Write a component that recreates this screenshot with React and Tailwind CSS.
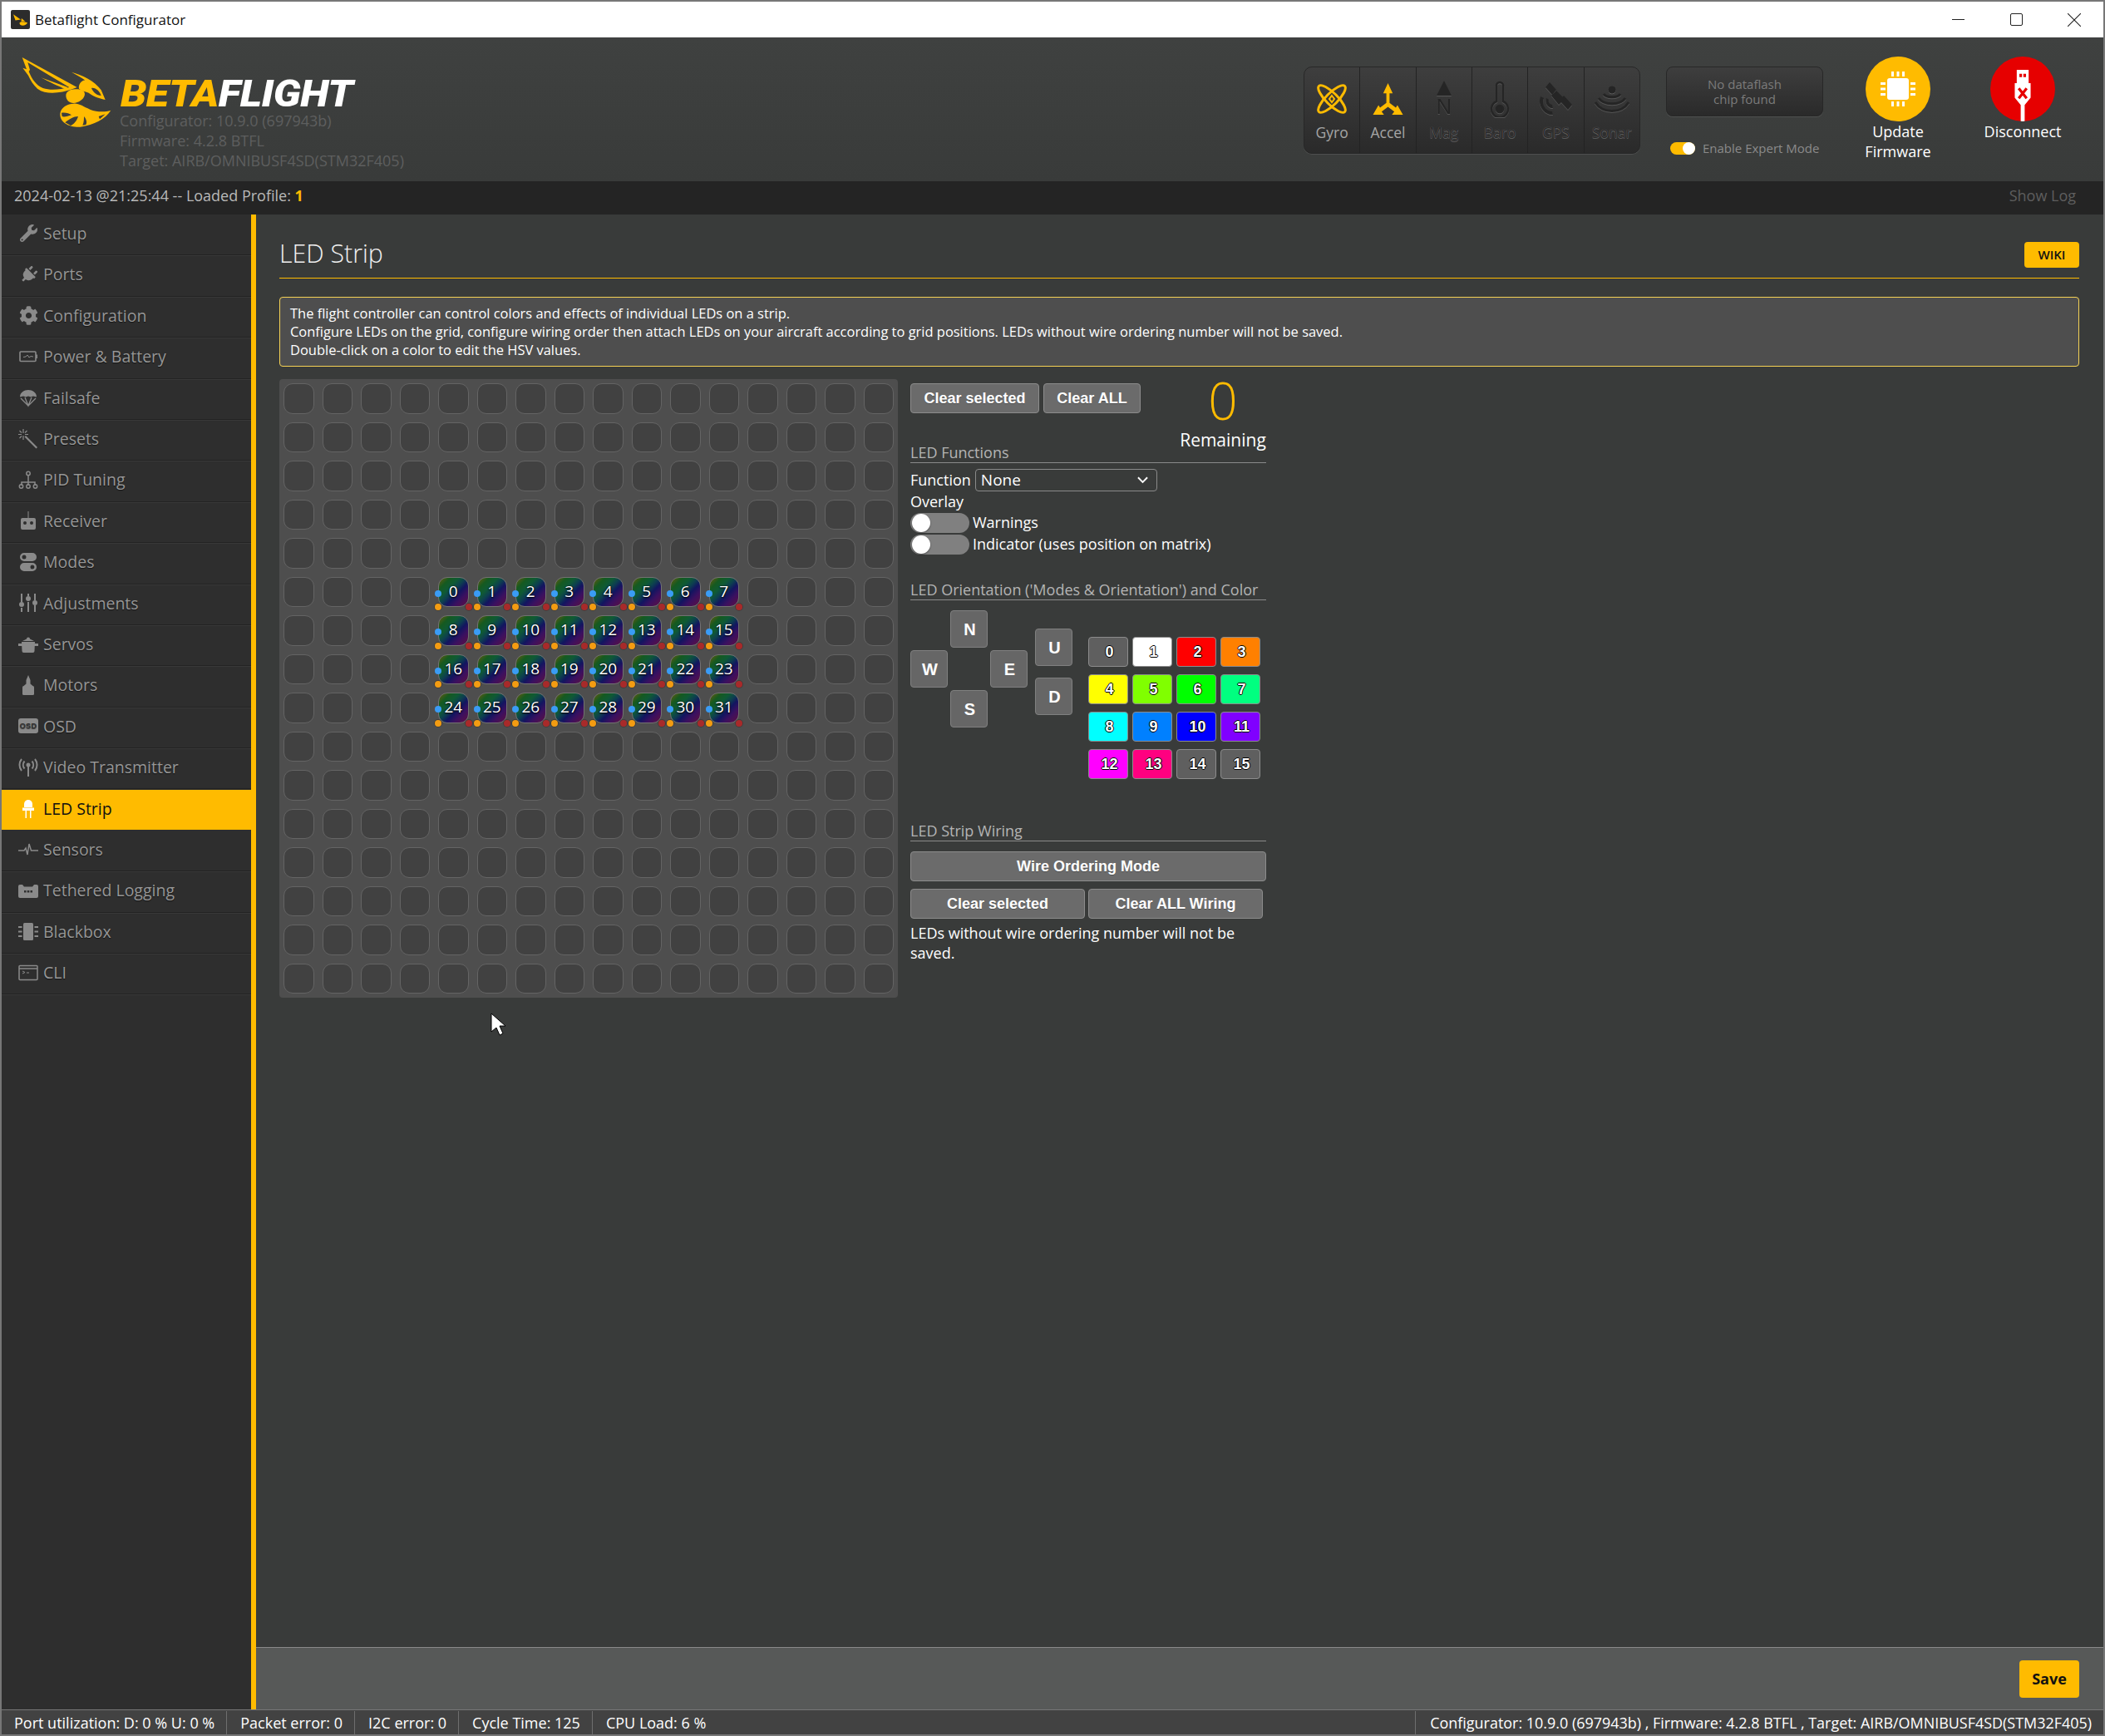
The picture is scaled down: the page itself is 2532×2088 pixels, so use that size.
import React from 'react';
import { FaWrench, FaPlug, FaCog } from 'react-icons/fa';

const SANS = "font-['Open_Sans',sans-serif]";

function IconBox({ children }) {
  return <span className="flex w-[24px] h-[24px] items-center justify-center text-[#8a8a8a]">{children}</span>;
}

const Svg = ({ children, vb = '0 0 24 24', cls = 'w-[24px] h-[24px]' }) => (
  <svg viewBox={vb} className={cls} fill="currentColor">{children}</svg>
);

const navItems = [
  { label: 'Setup', icon: <FaWrench className="w-[21px] h-[21px]" /> },
  { label: 'Ports', icon: <FaPlug className="w-[21px] h-[21px] rotate-45" /> },
  { label: 'Configuration', icon: <FaCog className="w-[23px] h-[23px]" /> },
  {
    label: 'Power & Battery',
    icon: (
      <Svg>
        <rect x="2" y="6" width="19" height="11.500" rx="1" fill="none" stroke="currentColor" strokeWidth="1.600" />
        <rect x="21.500" y="9.500" width="1.500" height="4.500" />
        <path d="M6 12.500l3-.5 2-2 2 3 2-1.500 3 .5" fill="none" stroke="currentColor" strokeWidth="1" />
      </Svg>
    ),
  },
  {
    label: 'Failsafe',
    icon: (
      <Svg>
        <path d="M2 11.500C2 6 7 3 12 3s10 3 10 8.500l-4-1-3 1-3-1-3 1-3-1z" />
        <path d="M3 13l9 9 9-9M8 12l4 10 4-10" fill="none" stroke="currentColor" strokeWidth="1.300" />
      </Svg>
    ),
  },
  {
    label: 'Presets',
    icon: (
      <Svg>
        <path d="M9 8l14 14-1.500 1.500L7.500 9.500z" />
        <path d="M6 0v5M6 8v5M0 6.500h4M8 6.500h4M1.500 2l2.500 2.500M10.500 2L8 4.500M1.500 11L4 8.500" fill="none" stroke="currentColor" strokeWidth="1.200" />
      </Svg>
    ),
  },
  {
    label: 'PID Tuning',
    icon: (
      <Svg>
        <path d="M12 7v5M4 19v-4h16v4M12 12v7" fill="none" stroke="currentColor" strokeWidth="1.500" />
        <circle cx="12" cy="4.500" r="2.200" fill="none" stroke="currentColor" strokeWidth="1.500" />
        <circle cx="3.500" cy="20" r="2.200" fill="none" stroke="currentColor" strokeWidth="1.500" />
        <circle cx="12" cy="20" r="2.200" fill="none" stroke="currentColor" strokeWidth="1.500" />
        <circle cx="20.500" cy="20" r="2.200" fill="none" stroke="currentColor" strokeWidth="1.500" />
      </Svg>
    ),
  },
  {
    label: 'Receiver',
    icon: (
      <Svg>
        <path d="M11.500 1h1v8h-1z" />
        <path fillRule="evenodd" d="M5 9h14a2 2 0 0 1 2 2v10a2 2 0 0 1-2 2H5a2 2 0 0 1-2-2V11a2 2 0 0 1 2-2zm3 4a2 2 0 1 0 0 4 2 2 0 0 0 0-4zm8 0a2 2 0 1 0 0 4 2 2 0 0 0 0-4z" />
      </Svg>
    ),
  },
  {
    label: 'Modes',
    icon: (
      <Svg>
        <path fillRule="evenodd" d="M7 1h10a5 5 0 0 1 0 10H7A5 5 0 0 1 7 1zm0 2.500a2.500 2.500 0 1 0 0 5 2.500 2.500 0 0 0 0-5zM7 13h10a5 5 0 0 1 0 10H7a5 5 0 0 1 0-10zm10 2.500a2.500 2.500 0 1 0 0 5 2.500 2.500 0 0 0 0-5z" />
      </Svg>
    ),
  },
  {
    label: 'Adjustments',
    icon: (
      <Svg>
        <path d="M3 1h2v10H3zM3 18h2v5H3zM11 1h2v3h-2zM11 11h2v12h-2zM19 1h2v8h-2zM19 15h2v8h-2z" />
        <circle cx="4" cy="14" r="3" />
        <circle cx="12" cy="7" r="3" />
        <circle cx="20" cy="12" r="3" />
      </Svg>
    ),
  },
  {
    label: 'Servos',
    icon: (
      <Svg>
        <path d="M10 5.500a2 2 0 0 1 4 0l5 2.500H5z" />
        <path d="M4 9h16l-.500 11a2 2 0 0 1-2 2h-11a2 2 0 0 1-2-2z" />
        <path d="M0 11h24v3H0z" />
      </Svg>
    ),
  },
  {
    label: 'Motors',
    icon: (
      <Svg>
        <path d="M12 0l2.500 6v4.500l3 2.500H6.500l3-2.500V6z" />
        <rect x="5" y="13" width="14" height="11" rx="1.500" />
      </Svg>
    ),
  },
  {
    label: 'OSD',
    icon: (
      <span className="flex w-[24px] h-[18px] items-center justify-center rounded-[3px] bg-[#8a8a8a] font-['Liberation_Sans',sans-serif] text-[9px] font-bold leading-none tracking-[0.4px] text-[#2f2f2f]">OSD</span>
    ),
  },
  {
    label: 'Video Transmitter',
    icon: (
      <Svg>
        <circle cx="12" cy="9" r="2.500" />
        <path d="M11 10h2v13h-2z" />
        <path d="M7.500 4.500a7 7 0 0 0 0 9M16.500 4.500a7 7 0 0 1 0 9M4 2a11 11 0 0 0 0 14M20 2a11 11 0 0 1 0 14" fill="none" stroke="currentColor" strokeWidth="2" />
      </Svg>
    ),
  },
  {
    label: 'LED Strip',
    active: true,
    icon: (
      <Svg>
        <path d="M7 10V6a5 5 0 0 1 10 0v4z" fill="#fff" />
        <path d="M5 10.500h14V14H5z" fill="#fff" />
        <path d="M8.500 14h1.500v9H8.500zM14 14h1.500v9H14z" fill="#fff" />
      </Svg>
    ),
  },
  {
    label: 'Sensors',
    icon: (
      <Svg>
        <path d="M0 13h7l2-3 2 8 2-13 2.500 8H24" fill="none" stroke="currentColor" strokeWidth="1.500" />
      </Svg>
    ),
  },
  {
    label: 'Tethered Logging',
    icon: (
      <Svg>
        <path fillRule="evenodd" d="M2 5h3l2 2.500h10L19 5h3a2 2 0 0 1 2 2v12a2 2 0 0 1-2 2H2a2 2 0 0 1-2-2V7a2 2 0 0 1 2-2zm5 7v2.500h2.500V12zm3.700 0v2.500h2.600V12zm3.800 0v2.500H17V12z" />
      </Svg>
    ),
  },
  {
    label: 'Blackbox',
    icon: (
      <Svg>
        <rect x="6" y="2" width="12" height="21" rx="1.500" />
        <path d="M0 6h4.500v2H0zM0 11.500h4.500v2H0zM0 17h4.500v2H0zM19.500 6H24v2h-4.500zM19.500 11.500H24v2h-4.500zM19.500 17H24v2h-4.500z" />
      </Svg>
    ),
  },
  {
    label: 'CLI',
    icon: (
      <Svg>
        <rect x="1" y="3.500" width="22" height="17" rx="1" fill="none" stroke="currentColor" strokeWidth="1.500" />
        <path d="M1 7h22" stroke="currentColor" strokeWidth="1.500" />
        <path d="M5 10l3 1.500L5 13M10 12h3" fill="none" stroke="currentColor" strokeWidth="1" />
      </Svg>
    ),
  },
];

const colors = [
  '#5f5f5f', '#ffffff', '#ff0000', '#ff8000',
  '#ffff00', '#80ff00', '#00ff00', '#00ff80',
  '#00ffff', '#0080ff', '#0000ff', '#8000ff',
  '#ff00ff', '#ff0080', '#5f5f5f', '#5f5f5f',
];

function BeeLogo() {
  return (
    <svg viewBox="0 0 390 300" className="w-[130px] h-[100px] shrink-0" fill="#ffbb00">
      <path fillRule="evenodd" d="M20 27L218 135L200 142C160 155 110 165 75 140C60 125 50 110 42 92L22 65L36 70ZM40 45L48 72L44 78C55 105 70 128 95 138C125 148 160 142 190 135Z" />
      <path d="M88 100L185 135L175 142C150 130 115 115 88 100Z" />
      <path fillRule="evenodd" d="M198 80C235 90 280 110 305 145L320 180C300 175 280 170 260 155C250 150 235 150 225 140C222 125 235 108 248 110C235 100 215 90 198 80ZM270 138C285 135 300 150 305 165C290 165 275 152 270 138Z" />
      <path d="M178 165C178 150 195 140 215 142C235 142 250 150 245 165C240 180 225 190 205 192C190 192 178 180 178 165Z" />
      <path fillRule="evenodd" d="M340 218C320 250 280 270 230 278C190 280 155 262 157 230C160 205 185 195 205 194C225 192 240 205 265 215C290 225 320 225 340 218ZM162 227C175 225 190 228 198 235C185 240 170 243 164 240ZM175 262C190 250 205 240 222 240C218 255 205 270 195 273ZM243 240C252 250 255 262 250 270L238 272C243 262 243 250 243 240ZM296 240L320 232L300 250Z" />
    </svg>
  );
}

const OFF = '#252525';
const dim = '[filter:drop-shadow(0_1px_0_rgba(255,255,255,0.16))]';

function GyroIcon() {
  return (
    <svg viewBox="0 0 36 36" className="w-[36px] h-[36px]" fill="none" stroke="#ffbb00" strokeWidth="3">
      <ellipse cx="18" cy="18" rx="7" ry="22" transform="rotate(-45 18 18)" />
      <ellipse cx="18" cy="18" rx="7" ry="22" transform="rotate(45 18 18)" />
      <path d="M18 14l3 4-3 4-3-4z" strokeWidth="2" />
    </svg>
  );
}

function AccelIcon() {
  return (
    <svg viewBox="0 0 42 40" className="w-[41px] h-[38px]" fill="#ffbb00">
      <path d="M21 0l6 13h-4v12l8 6 2-3 7 12H26l3-4-8-6-8 6 3 4H2l7-12 2 3 8-6V13h-4z" />
    </svg>
  );
}

function MagIcon() {
  return (
    <div className={`flex h-[44px] w-[42px] flex-col items-center ${dim}`} style={{ color: OFF }}>
      <svg viewBox="0 0 20 20" className="w-[20px] h-[18px]" fill="currentColor"><path d="M10 0l10 20H0z" /></svg>
      <span className="font-['Liberation_Sans',sans-serif] text-[26px] leading-[26px]">N</span>
    </div>
  );
}

function BaroIcon() {
  return (
    <svg viewBox="0 0 24 44" className={`w-[24px] h-[44px] ${dim}`} fill="none" stroke={OFF} strokeWidth="2.500">
      <path d="M8 25V6a4 4 0 0 1 8 0v19a10 10 0 1 1-8 0z" />
      <circle cx="12" cy="34" r="4" fill={OFF} />
    </svg>
  );
}

function GpsIcon() {
  return (
    <svg viewBox="0 0 40 40" className={`w-[40px] h-[40px] ${dim}`} fill={OFF}>
      <path d="M8 6l5-6 8 9-5 6zM25 22l5-6 10 11-5 6zM15 16l6-6 10 10-7 7z" />
      <path d="M2 17c-4 10 4 23 15 22l-1-4C8 35 3 27 6 19zM9 19c-2 6 2 12 8 12l-1-4c-3 0-5-3-4-6z" />
    </svg>
  );
}

function SonarIcon() {
  return (
    <svg viewBox="0 0 42 34" className={`w-[42px] h-[34px] ${dim}`} fill="none" stroke={OFF} strokeWidth="3">
      <circle cx="21" cy="6" r="4" fill={OFF} strokeWidth="1" />
      <path d="M11 11c3 5 17 5 20 0M5 16c6 9 26 9 32 0M1 21c8 14 32 14 40 0" />
    </svg>
  );
}

const sensors = [
  { label: 'Gyro', icon: <GyroIcon />, on: true },
  { label: 'Accel', icon: <AccelIcon />, on: true },
  { label: 'Mag', icon: <MagIcon /> },
  { label: 'Baro', icon: <BaroIcon /> },
  { label: 'GPS', icon: <GpsIcon /> },
  { label: 'Sonar', icon: <SonarIcon /> },
];

function GridCell({ index }) {
  const col = index % 16;
  const row = Math.floor(index / 16);
  const lit = col >= 4 && col <= 11 && row >= 5 && row <= 8;
  if (!lit) {
    return <div className="m-[5px] h-[36.5px] w-[36.5px] rounded-[11px] border border-[#646464] bg-[#414141]" />;
  }
  const n = (row - 5) * 8 + (col - 4);
  return (
    <div className="relative m-[5px] flex h-[36.5px] w-[36.5px] items-center justify-center rounded-[11px] border border-[#727272] bg-[linear-gradient(135deg,#6b5a10_0%,#155a20_20%,#0f5a35_35%,#0d3f50_48%,#121560_60%,#3a1060_75%,#5f1040_100%)] pb-[2px] text-[19px] text-white [text-shadow:0_0_2px_#000,0_1px_2px_#000]">
      {n}
      <span className="absolute left-[-5px] top-[15px] h-[8px] w-[8px] rounded-full bg-[#3a9cf5]" />
      <span className="absolute bottom-[-5px] left-[-5px] h-[8px] w-[8px] rounded-full bg-[#f39c12] ring-1 ring-black/20" />
      <span className="absolute bottom-[-5px] right-[-5px] h-[8px] w-[8px] rounded-full bg-[#a82a2a] ring-1 ring-black/20" />
    </div>
  );
}

const btn = "flex items-center justify-center rounded-[4px] border border-[#8c8c8c] bg-[#6b6b6b] font-['Liberation_Sans',sans-serif] text-[18px] font-bold text-white [text-shadow:0_1px_rgba(0,0,0,0.25)]";
const dirBtn = "flex h-[45px] w-[45px] items-center justify-center rounded-[4px] border border-[#808080] bg-[#666666] pl-[2px] font-['Liberation_Sans',sans-serif] text-[20px] font-bold text-white";

function SectionTitle({ children, cls = '' }) {
  return <div className={`whitespace-nowrap border-b border-[#8a8a8a] text-[18px] leading-[24px] text-[#b4b4b4] ${cls}`}>{children}</div>;
}

function Toggle() {
  return (
    <span className="flex h-[24px] w-[71px] items-center rounded-full bg-[#808080]">
      <span className="ml-[2px] h-[22px] w-[22px] rounded-full bg-white shadow-[0_1px_2px_rgba(0,0,0,0.4)]" />
    </span>
  );
}

function FooterCell({ children, pad = 'pl-[16px]' }) {
  return <div className={`flex h-full items-center border-r border-[#6e6e6e] pr-[14px] ${pad}`}>{children}</div>;
}

export default function App() {
  return (
    <div className={`relative flex h-[2088px] w-full flex-col overflow-hidden border-2 border-[#777777] bg-[#393b3a] ${SANS}`}>
      {/* window title */}
      <div className="relative flex h-[43px] shrink-0 items-center bg-white">
        <span className="ml-[11px] flex h-[23px] w-[23px] items-center justify-center rounded-[2px] bg-[#2c2c2c]">
          <svg viewBox="0 0 107 85" className="w-[17px] h-[14px]" fill="#ffbb00"><path d="M0 0l56 39-40 6zM62 30l28 24-30 0zM47 66c0-8 20-14 60-3-8 26-60 30-60 3z" /></svg>
        </span>
        <span className="ml-[6px] text-[17px] text-[#111111]">Betaflight Configurator</span>
        <div className="absolute right-[0px] top-0 flex h-[43px] items-center">
          <span className="flex w-[70px] justify-center"><span className="h-[1px] w-[15px] bg-[#222222]" /></span>
          <span className="flex w-[70px] justify-center"><span className="h-[15px] w-[15px] rounded-[2px] border border-[#222222]" /></span>
          <span className="flex w-[70px] justify-center">
            <svg viewBox="0 0 16 16" className="h-[16px] w-[16px]" stroke="#222222" strokeWidth="1.100"><path d="M0 0l16 16M16 0L0 16" /></svg>
          </span>
        </div>
      </div>

      {/* header */}
      <div className="flex h-[173px] shrink-0 bg-[linear-gradient(#3f4140,#393b3a)]">
        <div className="ml-[18px] mt-[15px] shrink-0"><BeeLogo /></div>
        <div className="-ml-[6px] mt-[50px]">
          <div className="ml-[1px] h-[37px] origin-left scale-x-[1.14] font-['Roboto',sans-serif] text-[44px] font-black italic leading-[37px] tracking-[-0.5px]">
            <span className="text-[#ffbb00]">BETA</span><span className="text-white">FLIGHT</span>
          </div>
          <div className="mt-[1px] text-[18px] leading-[24px] text-[#5e5f5f]">
            <div>Configurator: 10.9.0 (697943b)</div>
            <div>Firmware: 4.2.8 BTFL</div>
            <div>Target: AIRB/OMNIBUSF4SD(STM32F405)</div>
          </div>
        </div>

        <div className="ml-auto mt-[35px] flex h-[105px] w-[405px] rounded-[10px] border border-[#272727] bg-[linear-gradient(#3e3e3e,#2a2a2a)] shadow-[0_1px_rgba(255,255,255,0.1)]">
          {sensors.map((s, i) => (
            <div key={s.label} className={`flex flex-1 flex-col items-center pt-[16px] ${i < 5 ? 'border-r border-[#232323]' : ''}`}>
              <div className="flex h-[44px] items-center justify-center">{s.icon}</div>
              <span className={`mt-[6px] text-[17.5px] leading-[24px] ${s.on ? 'text-[#a5a5a5]' : 'text-[#2a2a2a] [text-shadow:0_0_1px_rgba(255,255,255,0.3),0_1px_rgba(255,255,255,0.2)]'}`}>{s.label}</span>
            </div>
          ))}
        </div>

        <div className="ml-[31px] mt-[35px] w-[189px]">
          <div className="flex h-[60px] flex-col items-center justify-center rounded-[8px] border border-[#272727] bg-[linear-gradient(#3e3e3e,#2a2a2a)] text-center text-[15px] leading-[18px] text-[#7b7b7b] shadow-[0_1px_rgba(255,255,255,0.1)]">
            <span>No dataflash</span>
            <span>chip found</span>
          </div>
          <div className="ml-[5px] mt-[29px] flex items-center">
            <span className="flex h-[15px] w-[30px] items-center justify-end rounded-full bg-[#ffbb00]">
              <span className="h-[15px] w-[15px] rounded-full bg-white" />
            </span>
            <span className="ml-[9px] text-[15px] leading-[18px] text-[#8a8a8a]">Enable Expert Mode</span>
          </div>
        </div>

        <div className="ml-[51px] mt-[23px] flex w-[78px] flex-col items-center">
          <span className="flex h-[78px] w-[78px] shrink-0 items-center justify-center rounded-full bg-[#ffbb00]">
            <svg viewBox="0 0 44 44" className="h-[44px] w-[44px]" fill="#fff">
              <rect x="9" y="9" width="26" height="26" rx="3" />
              <path d="M14 1h3v6h-3zM20.500 1h3v6h-3zM27 1h3v6h-3zM14 37h3v6h-3zM20.500 37h3v6h-3zM27 37h3v6h-3zM1 14h6v3H1zM1 20.500h6v3H1zM1 27h6v3H1zM37 14h6v3h-6zM37 20.500h6v3h-6zM37 27h6v3h-6z" />
            </svg>
          </span>
          <span className="whitespace-nowrap text-center text-[18px] leading-[24px] text-white">Update<br />Firmware</span>
        </div>

        <div className="ml-[72px] mt-[23px] flex w-[78px] flex-col items-center">
          <span className="flex h-[78px] w-[78px] shrink-0 items-start justify-center overflow-hidden rounded-full bg-[#e60000]">
            <svg viewBox="0 0 26 78" className="mt-[16px] h-[62px] w-[26px]">
              <path d="M4 0h18v20h3v22l-9 11v25h-6V53L1 42V20h3z" fill="#fff" />
              <path d="M8 6h4v5H8zM14 6h4v5h-4z" fill="#e60000" />
              <path d="M7 28l12 15M19 28L7 43" stroke="#e60000" strokeWidth="4" />
            </svg>
          </span>
          <span className="whitespace-nowrap text-[18px] leading-[24px] text-white">Disconnect</span>
        </div>
        <div className="w-[58px] shrink-0" />
      </div>

      {/* log bar */}
      <div className="flex h-[40px] shrink-0 items-center justify-between bg-[#242424] pb-[5px] pl-[15px] pr-[33px] text-[18px]">
        <span className="text-[#b9b9b9]">2024-02-13 @21:25:44 -- Loaded Profile: <b className="text-[#ffbb00]">1</b></span>
        <span className="text-[#5e5e5e]">Show Log</span>
      </div>

      <div className="flex min-h-0 flex-1">
        {/* sidebar */}
        <nav className="w-[306px] shrink-0 border-r-[6px] border-[#ffbb00] bg-[#2e2e2e]">
          {navItems.map((item) => (
            <div
              key={item.label}
              className={`flex h-[49.4px] items-center pl-[20px] pb-[3px] text-[19.5px] ${item.active ? 'border-y border-[#2e2e2e] bg-[#ffbb00] bg-clip-padding text-[#111111]' : 'border-b border-[#232323] text-[#969696] shadow-[0_1px_rgba(255,255,255,0.05)] [text-shadow:0_1px_1px_rgba(0,0,0,0.6)]'}`}
            >
              <IconBox>{item.icon}</IconBox>
              <span className="ml-[6px]">{item.label}</span>
            </div>
          ))}
        </nav>

        <div className="flex min-w-0 flex-1 flex-col">
          <main className="min-h-0 flex-1 pl-[28px] pr-[29px] pt-[33px] text-white">
            <div className="flex h-[44px] items-start justify-between border-b border-[#ffbb00]">
              <h1 className="text-[30.3px] font-light leading-[28px] text-[#f0f0f0]">LED Strip</h1>
              <span className="flex h-[31px] w-[66px] items-center justify-center rounded-[4px] bg-[#ffbb00] text-[15px] font-semibold text-[#111111]">WIKI</span>
            </div>

            <div className="mt-[22px] h-[84px] rounded-[4px] border border-[#f5d255] bg-[#4e4e4e] px-[12px] py-[8px] text-[16.47px] leading-[22px] text-white">
              <div>The flight controller can control colors and effects of individual LEDs on a strip.</div>
              <div>Configure LEDs on the grid, configure wiring order then attach LEDs on your aircraft according to grid positions. LEDs without wire ordering number will not be saved.</div>
              <div>Double-click on a color to edit the HSV values.</div>
            </div>

            <div className="mt-[15px] flex items-start">
              {/* LED grid */}
              <div className="grid h-[744px] w-[744px] grid-cols-[repeat(16,46.5px)] rounded-[4px] bg-[#4e4e4e]">
                {Array.from({ length: 256 }, (_, i) => <GridCell key={i} index={i} />)}
              </div>

              {/* controls */}
              <div className="ml-[15px] w-[428px]">
                <div className="relative h-[101px]">
                  <div className="flex gap-[5px] pt-[5px]">
                    <button className={`${btn} h-[36px] w-[155px]`}>Clear selected</button>
                    <button className={`${btn} h-[36px] w-[117px]`}>Clear ALL</button>
                  </div>
                  <SectionTitle cls="absolute bottom-0 left-0 right-0">LED Functions</SectionTitle>
                  <div className="absolute right-0 top-[-5px] flex w-[104px] flex-col items-center">
                    <span className="text-[62px] font-light leading-[60px] text-[#ffbb00]">0</span>
                    <span className="mt-[5px] text-[21px] leading-[26px] text-white">Remaining</span>
                  </div>
                </div>

                <div className="mt-[7px] flex h-[27px] items-center text-[18px]">
                  <span>Function</span>
                  <span className="ml-[5px] flex h-[27px] w-[219px] items-center justify-between rounded-[4px] border border-[#8a8a8a] pl-[6px] pr-[10px] text-[19px] leading-none">
                    None
                    <svg viewBox="0 0 14 9" className="h-[9px] w-[13px]" fill="none" stroke="#ffffff" strokeWidth="2"><path d="M1 1l6 6 6-6" /></svg>
                  </span>
                </div>
                <div className="h-[25px] text-[18px] leading-[25px]">Overlay</div>
                <div className="flex h-[26px] items-center gap-[4px] text-[18px]"><Toggle /><span className="-mt-[2px]">Warnings</span></div>
                <div className="flex h-[26px] items-center gap-[4px] text-[18px]"><Toggle /><span className="-mt-[2px]">Indicator (uses position on matrix)</span></div>

                <SectionTitle cls="mt-[29px]">LED Orientation ('Modes &amp; Orientation') and Color</SectionTitle>

                <div className="mt-[12px] flex h-[205px] items-start">
                  <div className="grid grid-cols-[45px_45px_45px] grid-rows-[45px_45px_45px] gap-[3px]">
                    <span />
                    <span className={dirBtn}>N</span>
                    <span />
                    <span className={dirBtn}>W</span>
                    <span />
                    <span className={dirBtn}>E</span>
                    <span />
                    <span className={dirBtn}>S</span>
                    <span />
                  </div>
                  <div className="ml-[9px] mt-[22px] flex flex-col gap-[14px]">
                    <span className={dirBtn}>U</span>
                    <span className={dirBtn}>D</span>
                  </div>
                  <div className="ml-[19px] mt-[32px] grid grid-cols-[repeat(4,48px)] grid-rows-[repeat(4,36px)] gap-x-[5px] gap-y-[9px]">
                    {colors.map((c, i) => (
                      <span
                        key={i}
                        style={{ backgroundColor: c }}
                        className="flex items-center justify-center rounded-[4px] border border-[#8c8c8c] pl-[3px] font-['Liberation_Sans',sans-serif] text-[18px] font-bold text-white [text-shadow:1px_0_#000,-1px_0_#000,0_1px_#000,0_-1px_#000]"
                      >
                        {i}
                      </span>
                    ))}
                  </div>
                </div>

                <SectionTitle cls="mt-[48px]">LED Strip Wiring</SectionTitle>
                <button className={`${btn} mt-[12px] h-[36px] w-full`}>Wire Ordering Mode</button>
                <div className="mt-[9px] flex gap-[4px]">
                  <button className={`${btn} h-[36px] w-[210px]`}>Clear selected</button>
                  <button className={`${btn} h-[36px] w-[210px]`}>Clear ALL Wiring</button>
                </div>
                <p className="mt-[5px] text-[18px] leading-[24px] text-white">LEDs without wire ordering number will not be saved.</p>
              </div>
            </div>
          </main>

          {/* save bar */}
          <div className="flex h-[75px] shrink-0 items-center justify-end border-t border-[#8a8a8a] bg-[#575958] pr-[29px]">
            <span className="flex h-[45px] w-[72px] items-center justify-center rounded-[4px] bg-[#ffbb00] text-[18px] font-bold text-[#111111]">Save</span>
          </div>
        </div>
      </div>

      {/* status bar */}
      <div className="flex h-[30px] shrink-0 items-center border-t border-[#777777] bg-[#424242] pt-[1px] text-[18px] text-white">
        <FooterCell pad="pl-[15px]">Port utilization: D: 0 % U: 0 %</FooterCell>
        <FooterCell>Packet error: 0</FooterCell>
        <FooterCell>I2C error: 0</FooterCell>
        <FooterCell>Cycle Time: 125</FooterCell>
        <div className="px-[16px]">CPU Load: 6 %</div>
        <div className="ml-auto flex h-full items-center border-l border-[#6e6e6e] pl-[17px] pr-[14px] text-[17.95px]">Configurator: 10.9.0 (697943b) , Firmware: 4.2.8 BTFL , Target: AIRB/OMNIBUSF4SD(STM32F405)</div>
      </div>

      {/* mouse pointer */}
      <svg viewBox="0 0 18 28" className="absolute left-[588px] top-[1216px] h-[28px] w-[18px]">
        <path d="M1 1v22l6-5 4 9 4-2-4-9h7z" fill="#ffffff" stroke="#000000" strokeWidth="1" />
      </svg>
    </div>
  );
}
